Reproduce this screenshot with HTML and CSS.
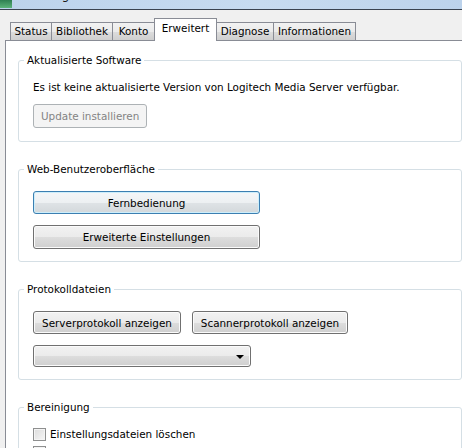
FILE: index.html
```html
<!DOCTYPE html>
<html lang="de">
<head>
<meta charset="utf-8">
<title>Logitech Media Server</title>
<link rel="stylesheet" href="styles.css">
</head>
<body>
<div class="window">
  <div class="titlebar">
    <span class="app-icon"></span>
    <span class="title-text">Logitech Media Server</span>
  </div>
  <div class="tabstrip">
    <div class="tab tab-status">Status</div>
    <div class="tab tab-library">Bibliothek</div>
    <div class="tab tab-account">Konto</div>
    <div class="tab tab-active">Erweitert</div>
    <div class="tab tab-diag">Diagnose</div>
    <div class="tab tab-info">Informationen</div>
  </div>
  <div class="panel">
    <div class="group group-update">
      <div class="group-title">Aktualisierte Software</div>
      <div class="group-body">
        <div class="desc">Es ist keine aktualisierte Version von Logitech Media Server verfügbar.</div>
        <div class="row row-update">
          <button class="btn btn-disabled btn-update" disabled>Update installieren</button>
        </div>
      </div>
    </div>

    <div class="group">
      <div class="group-title">Web-Benutzeroberfläche</div>
      <div class="group-body">
        <div class="row row-first">
          <button class="btn btn-focus btn-wide">Fernbedienung</button>
        </div>
        <div class="row row-next">
          <button class="btn btn-wide btn-tall">Erweiterte Einstellungen</button>
        </div>
      </div>
    </div>

    <div class="group">
      <div class="group-title">Protokolldateien</div>
      <div class="group-body">
        <div class="row row-first row-buttons">
          <button class="btn btn-server">Serverprotokoll anzeigen</button>
          <button class="btn btn-scanner">Scannerprotokoll anzeigen</button>
        </div>
        <div class="row row-next">
          <div class="select"><span class="select-arrow"></span></div>
        </div>
      </div>
    </div>

    <div class="group">
      <div class="group-title">Bereinigung</div>
      <div class="group-body">
        <label class="check row-check"><span class="checkbox"></span>Einstellungsdateien löschen</label>
        <label class="check"><span class="checkbox"></span>Cache-Ordner löschen</label>
      </div>
    </div>
  </div>
</div>
</body>
</html>
```

FILE: styles.css
```css
html, body {
  margin: 0;
  padding: 0;
  height: 100%;
  overflow: hidden;
}

body {
  background: #f0f0f0;
  font-family: "DejaVu Sans", Verdana, sans-serif;
  font-size: 10.4px;
  color: #000;
}

.window {
  width: 520px;
}

.titlebar {
  height: 9px;
  overflow: hidden;
  background: linear-gradient(to right, #bcd3ec 0%, #c7dbf0 50%, #b9d0ea 100%);
  border-bottom: 1px solid #3a4350;
  display: flex;
  align-items: flex-start;
}

.app-icon {
  width: 12px;
  height: 8px;
  background: linear-gradient(#2f7f52, #5bb37a);
  flex: none;
}

.title-text {
  margin-left: 36px;
  margin-top: -12px;
  font-size: 12px;
  line-height: 14px;
  color: #1a1a1a;
  white-space: nowrap;
}

.tabstrip {
  height: 30px;
  display: flex;
  align-items: flex-end;
  padding-left: 10px;
}

.tab {
  box-sizing: border-box;
  height: 18px;
  line-height: 17px;
  text-align: center;
  border: 1px solid #898c95;
  border-bottom: none;
  margin-right: -1px;
  background: linear-gradient(#f2f2f2 0%, #ebebeb 50%, #dddddd 51%, #cfcfcf 100%);
  white-space: nowrap;
  flex: none;
}

.tab-status { width: 42px; }
.tab-library { width: 62px; }
.tab-account { width: 43px; }
.tab-diag { width: 58px; }
.tab-info { width: 83px; }

.tab-active {
  position: relative;
  z-index: 1;
  width: 63px;
  height: 23px;
  line-height: 19px;
  margin-bottom: -1px;
  background: #fff;
}

.panel {
  margin-left: 5px;
  border-left: 1px solid #898c95;
  border-top: 1px solid #898c95;
  background: #fff;
  padding: 19px 0 0 12px;
  height: 420px;
}

.group {
  width: 442px;
  border: 1px solid #d5dfe5;
  border-radius: 3px;
  margin-bottom: 27px;
}

.group-title {
  width: fit-content;
  margin-top: -7px;
  margin-left: 5px;
  padding: 0 3px;
  line-height: 13px;
  background: #fff;
}

.group-body {
  padding: 0 14px 12px 14px;
}

.group-update .group-body {
  padding-bottom: 13px;
}

.desc {
  margin-top: 14px;
  line-height: 13px;
}

.row {
  display: flex;
}

.row-update {
  margin-top: 10px;
}

.row-first {
  margin-top: 15px;
}

.row-next {
  margin-top: 11px;
}

.row-buttons {
  gap: 11px;
}

.btn {
  font: inherit;
  color: #000;
  height: 23px;
  padding: 0 7px;
  border: 1px solid #707070;
  border-radius: 3px;
  background: linear-gradient(#f2f2f2 0%, #ebebeb 50%, #dddddd 51%, #cfcfcf 100%);
  box-shadow: inset 0 0 0 1px #fbfbfb;
  white-space: nowrap;
}

.btn-update {
  width: 114px;
  height: 24px;
}

.btn-wide {
  width: 227px;
}

.btn-tall {
  height: 24px;
}

.btn-server {
  width: 148px;
}

.btn-scanner {
  width: 156px;
}

.btn-focus {
  border-color: #3c7fb1;
  box-shadow: inset 0 0 0 1px #cdeefb;
  background: linear-gradient(#f4f6f8 0%, #edf0f2 50%, #dfe3e6 51%, #d3d8db 100%);
}

.btn-disabled {
  color: #838383;
  border-color: #adb2b5;
  background: #f4f4f4;
  box-shadow: none;
}

.select {
  width: 214px;
  height: 20px;
  border: 1px solid #707070;
  border-radius: 3px;
  background: linear-gradient(#f2f2f2 0%, #ebebeb 50%, #dddddd 51%, #cfcfcf 100%);
  box-shadow: inset 0 0 0 1px #fbfbfb;
  display: flex;
  align-items: center;
  justify-content: flex-end;
  padding-right: 2px;
}

.select-arrow {
  width: 0;
  height: 0;
  margin-right: 4px;
  margin-top: 1px;
  border-left: 4px solid transparent;
  border-right: 4px solid transparent;
  border-top: 4px solid #000;
}

.check {
  display: flex;
  align-items: center;
  line-height: 13px;
  margin-top: 5px;
}

.row-check {
  margin-top: 14px;
}

.checkbox {
  width: 11px;
  height: 11px;
  border: 1px solid #8e8f8f;
  background: linear-gradient(135deg, #dcdcdc, #f6f6f6);
  box-shadow: inset 0 0 0 1px #f4f4f4;
  margin-right: 4px;
  flex: none;
}
```
